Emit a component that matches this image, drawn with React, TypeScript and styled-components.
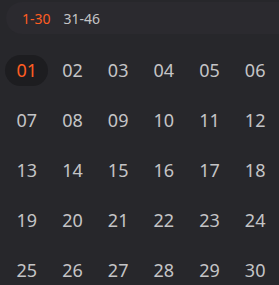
import React, { useState } from 'react';
import styled, { createGlobalStyle } from 'styled-components';

const GlobalStyle = createGlobalStyle`
  html, body {
    margin: 0;
    padding: 0;
    background: #27272b;
  }
  body {
    font-family: "Noto Sans", "Open Sans", sans-serif;
  }
`;

const Page = styled.div`
  width: 279px;
  height: 285px;
  overflow: hidden;
  background: #27272b;
  box-sizing: border-box;
  padding-top: 2px;
`;

const TabBar = styled.div`
  display: flex;
  align-items: center;
  gap: 13px;
  height: 32px;
  margin-left: 6px;
  padding-left: 16px;
  background: #2b2a2f;
  border-radius: 16px 0 0 16px;
`;

const Tab = styled.span<{ $active?: boolean }>`
  font-size: 14px;
  color: ${(p) => (p.$active ? '#ff5d22' : '#c4c4c6')};
  cursor: pointer;
`;

const Grid = styled.div`
  display: grid;
  grid-template-columns: repeat(6, 1fr);
  grid-auto-rows: 50px;
  padding: 11px 1px 0 4px;
`;

const Cell = styled.div`
  display: flex;
  align-items: center;
  justify-content: center;
`;

const Ball = styled.span<{ $selected?: boolean }>`
  display: flex;
  align-items: center;
  justify-content: center;
  width: 43px;
  height: 31px;
  border-radius: 16px;
  font-size: 18px;
  color: ${(p) => (p.$selected ? '#ff5d22' : '#c4c4c6')};
  background: ${(p) => (p.$selected ? '#1d1d20' : 'transparent')};
  cursor: pointer;
`;

const pad = (n: number) => String(n).padStart(2, '0');

const App: React.FC = () => {
  const [tab, setTab] = useState(0);
  const [selected, setSelected] = useState(1);
  const start = tab === 0 ? 1 : 31;
  const end = tab === 0 ? 30 : 46;
  const numbers = Array.from({ length: end - start + 1 }, (_, i) => start + i);

  return (
    <Page>
      <GlobalStyle />
      <TabBar>
        <Tab $active={tab === 0} onClick={() => setTab(0)}>1-30</Tab>
        <Tab $active={tab === 1} onClick={() => setTab(1)}>31-46</Tab>
      </TabBar>
      <Grid>
        {numbers.map((n) => (
          <Cell key={n}>
            <Ball $selected={n === selected} onClick={() => setSelected(n)}>
              {pad(n)}
            </Ball>
          </Cell>
        ))}
      </Grid>
    </Page>
  );
};

export default App;
